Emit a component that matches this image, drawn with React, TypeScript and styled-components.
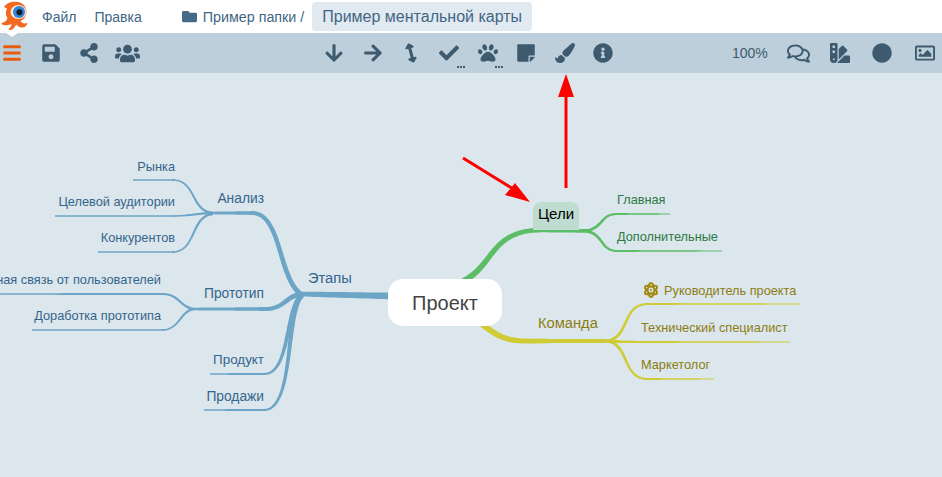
import React from "react";
import styled, { createGlobalStyle } from "styled-components";
import {
  FaBars, FaSave, FaShareAlt, FaUsers, FaArrowDown, FaArrowRight, FaArrowsAltV, FaCheck, FaPaw,
  FaStickyNote, FaPaintBrush, FaInfoCircle, FaRegComments, FaSwatchbook, FaCircle, FaRegImage, FaFolder, FaAtom,
} from "react-icons/fa";

const Global = createGlobalStyle`
  html, body { margin: 0; padding: 0; background: #dce6ed; }
  body { font-family: "Liberation Sans", Arial, sans-serif; overflow: hidden; }
`;

const Page = styled.div`
  width: 942px; height: 477px; display: flex; flex-direction: column; overflow: hidden;
`;
const MenuBar = styled.header`
  height: 33px; background: #fff; display: flex; align-items: center; position: relative; flex: none;
`;
const Logo = styled.svg`
  width: 29px; height: 33px; margin-right: 13px; flex: none;
`;
const Notch = styled.div`
  position: absolute; left: 6px; top: 33px; width: 0; height: 0; z-index: 2;
  border-left: 6px solid transparent; border-right: 6px solid transparent; border-top: 4px solid #fff;
`;
const MenuItem = styled.span`
  font-size: 14px; color: #3f6684; margin-right: 18px;
`;
const Crumb = styled.div`
  display: flex; align-items: center; gap: 6px; margin-left: 22px; font-size: 14.3px; color: #3f6684;
  svg { width: 15px; height: 15px; color: #446a89; }
`;
const Tab = styled.div`
  margin-left: 8px; height: 29px; padding: 0 10px; border-radius: 4px; background: #e2eaf1;
  display: flex; align-items: center; font-size: 16px; color: #3f6684;
`;
const Toolbar = styled.nav`
  height: 40px; background: #bdcfdb; display: grid; grid-template-columns: 315px 1fr auto; flex: none;
  align-items: center;
`;
const Group = styled.div`
  display: flex; align-items: center;
`;
const LeftGroup = styled(Group)`
  margin-left: -7px;
`;
const RightGroup = styled(Group)`
  margin-right: -4px;
`;
const Tool = styled.div<{ $w?: number; $accent?: boolean; $size?: number }>`
  width: ${(p) => p.$w ?? 38.4}px; height: 40px; display: flex; align-items: center; justify-content: center;
  position: relative; color: ${(p) => (p.$accent ? "#e85c0d" : "#3d5a6e")};
  svg { width: ${(p) => p.$size ?? 20}px; height: ${(p) => p.$size ?? 20}px; }
`;
const More = styled.span`
  position: absolute; right: 4px; bottom: 5px; width: 8px; height: 2px;
  background: repeating-linear-gradient(90deg, #3d5a6e 0 2px, transparent 2px 3px);
`;
const Zoom = styled.span`
  font-size: 14px; color: #3d5a6e; width: 37px; margin-right: 8px;
`;
const Canvas = styled.main`
  flex: 1; position: relative; background: #dce6ed; overflow: hidden;
`;
const Drawing = styled.svg`
  position: absolute; left: 0; top: -73px; width: 942px; height: 477px;
`;
const Label = styled.span<{ $x: number; $y: number; $c: string; $s?: number; $right?: boolean }>`
  position: absolute; top: ${(p) => p.$y - 73}px; white-space: nowrap; line-height: 16px;
  ${(p) => (p.$right ? `right: ${942 - p.$x}px;` : `left: ${p.$x}px;`)}
  font-size: ${(p) => p.$s ?? 12.75}px; color: ${(p) => p.$c};
`;
const GoalNode = styled.div`
  position: absolute; left: 533px; top: 129px; width: 46px; height: 28px; border-radius: 8px 8px 0 0;
  background: #bfdcd0; color: #000; font-size: 15px; display: flex; align-items: center; justify-content: center;
  padding-bottom: 5px; box-sizing: border-box;
`;
const RootNode = styled.div`
  position: absolute; left: 388px; top: 206px; width: 114px; height: 47px; border-radius: 15px;
  background: #fff; color: #444; font-size: 20px; display: flex; align-items: center; justify-content: center;
  padding-top: 2px; box-sizing: border-box;
`;
const AtomMark = styled.span`
  position: absolute; left: 643px; top: 209px; width: 16px; height: 16px; color: #a08a10;
  svg { width: 16px; height: 16px; display: block; }
`;

type P = [number, number];
// Tapered ribbon along a cubic Bezier, for the branches of the map.
function ribbon(a: P, b: P, c: P, d: P, w0: number, w1: number): string {
  const l: P[] = [];
  const r: P[] = [];
  const n = 40;
  for (let i = 0; i <= n; i++) {
    const t = i / n;
    const u = 1 - t;
    const x = u * u * u * a[0] + 3 * u * u * t * b[0] + 3 * u * t * t * c[0] + t * t * t * d[0];
    const y = u * u * u * a[1] + 3 * u * u * t * b[1] + 3 * u * t * t * c[1] + t * t * t * d[1];
    let dx = 3 * u * u * (b[0] - a[0]) + 6 * u * t * (c[0] - b[0]) + 3 * t * t * (d[0] - c[0]);
    let dy = 3 * u * u * (b[1] - a[1]) + 6 * u * t * (c[1] - b[1]) + 3 * t * t * (d[1] - c[1]);
    const m = Math.hypot(dx, dy) || 1;
    dx /= m;
    dy /= m;
    const w = (w0 + (w1 - w0) * t) / 2;
    l.push([x - dy * w, y + dx * w]);
    r.push([x + dy * w, y - dx * w]);
  }
  return "M" + l.concat(r.reverse()).map((q) => q[0].toFixed(1) + " " + q[1].toFixed(1)).join("L") + "Z";
}

const BLUE = "#6da5c6";
const GREEN = "#5bbd66";
const OLIVE = "#cfcb34";

type Seg = { c: string; p: [P, P, P, P]; w: [number, number] };
const line = (c: string, a: P, b: P, w: [number, number]): Seg => ({ c, p: [a, a, b, b], w });

const segments: Seg[] = [
  // Этапы
  line(BLUE, [392, 296], [300, 294], [7, 4.5]),
  { c: BLUE, p: [[302, 295], [278, 280], [282, 213], [252, 213]], w: [5, 4] },
  line(BLUE, [254, 213], [213, 213], [4, 2.5]),
  { c: BLUE, p: [[213, 213], [190, 211], [197, 180], [172, 180]], w: [2.5, 1.5] },
  line(BLUE, [175, 180], [133, 180], [1.5, 1.5]),
  { c: BLUE, p: [[213, 213], [200, 213], [190, 216], [172, 216]], w: [2.5, 1.5] },
  line(BLUE, [175, 216], [55, 216], [1.5, 1.5]),
  { c: BLUE, p: [[213, 214], [190, 216], [197, 252], [172, 252]], w: [2.5, 1.5] },
  line(BLUE, [175, 252], [98, 252], [1.5, 1.5]),
  { c: BLUE, p: [[302, 294], [285, 296], [285, 309], [265, 309]], w: [5, 4] },
  line(BLUE, [267, 309], [195, 309], [4, 2.5]),
  { c: BLUE, p: [[195, 309], [180, 308], [180, 294], [162, 294]], w: [2.5, 2] },
  line(BLUE, [165, 294], [0, 294], [2, 1.5]),
  { c: BLUE, p: [[195, 309], [180, 310], [180, 330], [162, 330]], w: [2.5, 1.5] },
  line(BLUE, [165, 330], [32, 330], [1.5, 1.5]),
  { c: BLUE, p: [[302, 295], [285, 310], [290, 374], [264, 374]], w: [5.5, 2] },
  line(BLUE, [266, 374], [210, 374], [2, 1.5]),
  { c: BLUE, p: [[302, 295], [285, 310], [295, 410], [264, 410]], w: [5.5, 2] },
  line(BLUE, [266, 410], [204, 410], [2, 1.5]),
  // Цели
  { c: GREEN, p: [[462, 282], [495, 265], [490, 231], [540, 230]], w: [6, 4.5] },
  line(GREEN, [535, 230], [590, 231], [4.5, 3.5]),
  { c: GREEN, p: [[587, 231], [605, 226], [600, 214], [618, 214]], w: [3, 2] },
  line(GREEN, [616, 214], [670, 214], [2, 1]),
  { c: GREEN, p: [[587, 231], [605, 236], [600, 251], [618, 251]], w: [3, 2] },
  line(GREEN, [616, 251], [722, 251], [2, 1]),
  // Команда
  { c: OLIVE, p: [[482, 324], [505, 343], [515, 341], [545, 341]], w: [6, 4.5] },
  line(OLIVE, [540, 341], [612, 341], [4.5, 3.5]),
  { c: OLIVE, p: [[608, 341], [630, 336], [622, 304], [648, 304]], w: [3, 2] },
  line(OLIVE, [646, 304], [800, 304], [2, 1]),
  { c: OLIVE, p: [[608, 341], [625, 342], [630, 342], [650, 342]], w: [3, 2] },
  line(OLIVE, [648, 342], [790, 342], [2, 1]),
  { c: OLIVE, p: [[608, 341], [630, 346], [622, 379], [648, 379]], w: [3, 2] },
  line(OLIVE, [646, 379], [714, 379], [2, 1]),
];

const TEXT_BLUE = "#34658c";
const TEXT_GREEN = "#2d7a42";
const TEXT_OLIVE = "#8c7d10";

const labels: { t: string; x: number; y: number; c: string; s?: number; right?: boolean }[] = [
  { t: "Рынка", x: 175, y: 159, c: TEXT_BLUE, right: true },
  { t: "Целевой аудитории", x: 175, y: 194, c: TEXT_BLUE, right: true },
  { t: "Конкурентов", x: 175, y: 230, c: TEXT_BLUE, right: true },
  { t: "Анализ", x: 264, y: 191, c: TEXT_BLUE, s: 13.8, right: true },
  { t: "Обратная связь от пользователей", x: 161, y: 272, c: TEXT_BLUE, right: true },
  { t: "Доработка прототипа", x: 161, y: 308, c: TEXT_BLUE, right: true },
  { t: "Прототип", x: 264, y: 286, c: TEXT_BLUE, s: 13.8, right: true },
  { t: "Продукт", x: 264, y: 352, c: TEXT_BLUE, s: 13.4, right: true },
  { t: "Продажи", x: 264, y: 389, c: TEXT_BLUE, s: 13.8, right: true },
  { t: "Этапы", x: 308, y: 270, c: TEXT_BLUE, s: 14.7 },
  { t: "Главная", x: 617, y: 192, c: TEXT_GREEN },
  { t: "Дополнительные", x: 617, y: 229, c: TEXT_GREEN },
  { t: "Команда", x: 538, y: 315, c: TEXT_OLIVE, s: 14.7 },
  { t: "Руководитель проекта", x: 664, y: 283, c: TEXT_OLIVE },
  { t: "Технический специалист", x: 641, y: 320, c: TEXT_OLIVE },
  { t: "Маркетолог", x: 641, y: 357, c: TEXT_OLIVE },
];

export default function App() {
  return (
    <Page>
      <Global />
      <MenuBar>
        <Logo viewBox="0 0 29 33">
          <path
            fill="#f26a21"
            d="M4 7C7 2 13 1 18 2C24 3 27 8 26.500 13C26 17 23 20 20.500 21C22 23 24 24 27 23C28 23.500 26 27 23 27.500C20 28 17.500 26 16 24.500C15.500 26 13.500 29.500 10.500 30C8.500 30 8 29 9.500 28C11 27 11.500 25.500 11.500 24C9.500 25 5 26 2 24.500C1 24 1.500 23 3 22.500C5.500 22 7 20 7.500 18C5 15 6 11 7 8.500C6 8 5 7.500 4 7Z"
          />
          <ellipse cx="18.500" cy="12" rx="8" ry="7" fill="#fbe3d0" />
          <circle cx="19" cy="12" r="6" fill="#2f86d6" />
          <circle cx="19.500" cy="12.300" r="3" fill="#0d1b2a" />
        </Logo>
        <Notch />
        <MenuItem>Файл</MenuItem>
        <MenuItem>Правка</MenuItem>
        <Crumb>
          <FaFolder />
          Пример папки /
        </Crumb>
        <Tab>Пример ментальной карты</Tab>
      </MenuBar>
      <Toolbar>
        <LeftGroup>
          <Tool $accent $size={20}><FaBars /></Tool>
          <Tool><FaSave /></Tool>
          <Tool><FaShareAlt /></Tool>
          <Tool $size={25}><FaUsers /></Tool>
        </LeftGroup>
        <Group>
          <Tool><FaArrowDown /></Tool>
          <Tool><FaArrowRight /></Tool>
          <Tool><FaArrowsAltV style={{ transform: "rotate(-15deg)" }} /></Tool>
          <Tool><FaCheck /><More /></Tool>
          <Tool><FaPaw /><More /></Tool>
          <Tool><FaStickyNote /></Tool>
          <Tool><FaPaintBrush /></Tool>
          <Tool><FaInfoCircle /></Tool>
        </Group>
        <RightGroup>
          <Zoom>100%</Zoom>
          <Tool $w={42} $size={23}><FaRegComments /></Tool>
          <Tool $w={42}><FaSwatchbook /></Tool>
          <Tool $w={42}><FaCircle /></Tool>
          <Tool $w={43}><FaRegImage /></Tool>
        </RightGroup>
      </Toolbar>
      <Canvas>
        <Drawing viewBox="0 0 942 477">
          {segments.map((s, i) => (
            <path key={i} fill={s.c} d={ribbon(s.p[0], s.p[1], s.p[2], s.p[3], s.w[0], s.w[1])} />
          ))}
          <g fill="none" stroke="#ff0000" strokeWidth="3">
            <path d="M566 188V92" />
            <path d="M463 158L515 190" />
          </g>
          <path fill="#ff0000" d="M566 74L574 97H558Z" />
          <path fill="#ff0000" d="M530 202L505 195L515 183Z" />
        </Drawing>
        {labels.map((l) => (
          <Label key={l.t} $x={l.x} $y={l.y} $c={l.c} $s={l.s} $right={l.right}>{l.t}</Label>
        ))}
        <AtomMark><FaAtom /></AtomMark>
        <GoalNode>Цели</GoalNode>
        <RootNode>Проект</RootNode>
      </Canvas>
    </Page>
  );
}
